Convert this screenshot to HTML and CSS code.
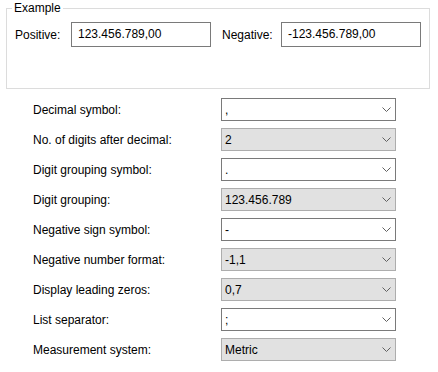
FILE: index.html
```html
<!DOCTYPE html>
<html>
<head>
<meta charset="utf-8">
<link rel="stylesheet" href="styles.css">
</head>
<body>
<fieldset class="example">
  <legend class="legend">Example</legend>
  <div class="sample-row">
    <span class="sample-label pos-label">Positive:</span>
    <div class="textbox">123.456.789,00</div>
    <span class="sample-label neg-label">Negative:</span>
    <div class="textbox">-123.456.789,00</div>
  </div>
</fieldset>
<div class="settings">
  <span class="label">Decimal symbol:</span>
  <div class="combo editable"><span class="value">,</span><svg class="chev" width="9" height="5" viewBox="0 0 9 5"><polyline points="0.5,0.5 4.5,4.5 8.5,0.5" fill="none" stroke="#606060" stroke-width="1"/></svg></div>

  <span class="label">No. of digits after decimal:</span>
  <div class="combo list"><span class="value">2</span><svg class="chev" width="9" height="5" viewBox="0 0 9 5"><polyline points="0.5,0.5 4.5,4.5 8.5,0.5" fill="none" stroke="#606060" stroke-width="1"/></svg></div>

  <span class="label">Digit grouping symbol:</span>
  <div class="combo editable"><span class="value">.</span><svg class="chev" width="9" height="5" viewBox="0 0 9 5"><polyline points="0.5,0.5 4.5,4.5 8.5,0.5" fill="none" stroke="#606060" stroke-width="1"/></svg></div>

  <span class="label">Digit grouping:</span>
  <div class="combo list"><span class="value">123.456.789</span><svg class="chev" width="9" height="5" viewBox="0 0 9 5"><polyline points="0.5,0.5 4.5,4.5 8.5,0.5" fill="none" stroke="#606060" stroke-width="1"/></svg></div>

  <span class="label">Negative sign symbol:</span>
  <div class="combo editable"><span class="value">-</span><svg class="chev" width="9" height="5" viewBox="0 0 9 5"><polyline points="0.5,0.5 4.5,4.5 8.5,0.5" fill="none" stroke="#606060" stroke-width="1"/></svg></div>

  <span class="label">Negative number format:</span>
  <div class="combo list"><span class="value">-1,1</span><svg class="chev" width="9" height="5" viewBox="0 0 9 5"><polyline points="0.5,0.5 4.5,4.5 8.5,0.5" fill="none" stroke="#606060" stroke-width="1"/></svg></div>

  <span class="label">Display leading zeros:</span>
  <div class="combo list"><span class="value">0,7</span><svg class="chev" width="9" height="5" viewBox="0 0 9 5"><polyline points="0.5,0.5 4.5,4.5 8.5,0.5" fill="none" stroke="#606060" stroke-width="1"/></svg></div>

  <span class="label">List separator:</span>
  <div class="combo editable"><span class="value">;</span><svg class="chev" width="9" height="5" viewBox="0 0 9 5"><polyline points="0.5,0.5 4.5,4.5 8.5,0.5" fill="none" stroke="#606060" stroke-width="1"/></svg></div>

  <span class="label">Measurement system:</span>
  <div class="combo list"><span class="value">Metric</span><svg class="chev" width="9" height="5" viewBox="0 0 9 5"><polyline points="0.5,0.5 4.5,4.5 8.5,0.5" fill="none" stroke="#606060" stroke-width="1"/></svg></div>
</div>
</body>
</html>
```
FILE: styles.css
```css
html, body {
  margin: 0;
  padding: 0;
  background: #ffffff;
}
body {
  font-family: "Liberation Sans", Arial, sans-serif;
  font-size: 12px;
  color: #000000;
  width: 438px;
  height: 372px;
  overflow: hidden;
}
.example {
  margin: 0 0 0 6px;
  width: 424px;
  box-sizing: border-box;
  border: 1px solid #dcdcdc;
  padding: 6px 0 41px 5px;
  min-width: 0;
}
.legend {
  padding: 0 2px;
  line-height: 16px;
  height: 16px;
}
.sample-row {
  display: flex;
  align-items: center;
  height: 25px;
}
.sample-label {
  line-height: 16px;
}
.pos-label {
  margin-left: 3px;
  width: 56px;
}
.neg-label {
  margin-left: 11px;
  width: 59px;
}
.textbox {
  width: 140px;
  height: 25px;
  box-sizing: border-box;
  border: 1px solid #7a7a7a;
  padding: 4px 0 0 6px;
  line-height: 14px;
  background: #ffffff;
}
.settings {
  display: grid;
  grid-template-columns: 188px 175px;
  row-gap: 7px;
  margin: 9px 0 0 33px;
}
.label {
  display: flex;
  align-items: center;
  height: 23px;
}
.combo {
  display: flex;
  align-items: center;
  justify-content: space-between;
  height: 23px;
  box-sizing: border-box;
  padding: 0 4px 0 3px;
}
.combo.editable {
  background: #ffffff;
  border: 1px solid #7a7a7a;
}
.combo.list {
  background: #e1e1e1;
  border: 1px solid #adadad;
}
.value {
  line-height: 16px;
}
.chev {
  display: block;
}
```
